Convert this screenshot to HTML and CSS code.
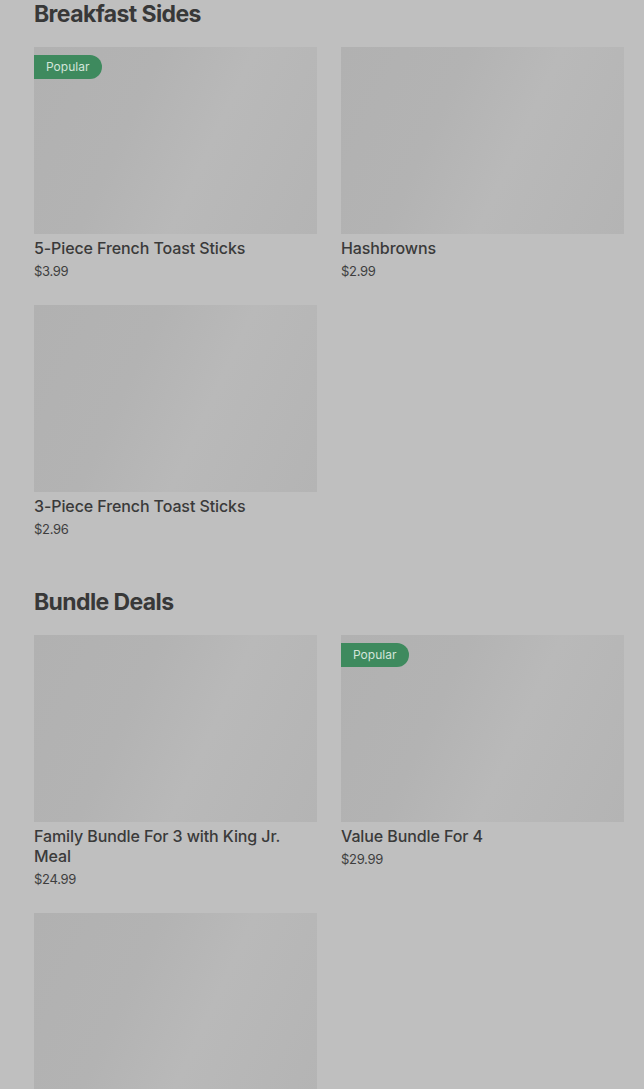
FILE: index.html
```html
<!DOCTYPE html>
<html lang="en">
<head>
<meta charset="utf-8">
<title>Menu</title>
<link rel="stylesheet" href="styles.css">
</head>
<body>
<main class="page">
  <section class="section">
    <h2 class="section-title">Breakfast Sides</h2>
    <div class="grid">
      <div class="card">
        <div class="thumb"><span class="badge">Popular</span></div>
        <div class="name">5-Piece French Toast Sticks</div>
        <div class="price">$3.99</div>
      </div>
      <div class="card">
        <div class="thumb"></div>
        <div class="name">Hashbrowns</div>
        <div class="price">$2.99</div>
      </div>
      <div class="card">
        <div class="thumb"></div>
        <div class="name">3-Piece French Toast Sticks</div>
        <div class="price">$2.96</div>
      </div>
    </div>
  </section>
  <section class="section">
    <h2 class="section-title">Bundle Deals</h2>
    <div class="grid">
      <div class="card">
        <div class="thumb"></div>
        <div class="name">Family Bundle For 3 with King Jr. Meal</div>
        <div class="price">$24.99</div>
      </div>
      <div class="card">
        <div class="thumb"><span class="badge">Popular</span></div>
        <div class="name">Value Bundle For 4</div>
        <div class="price">$29.99</div>
      </div>
      <div class="card">
        <div class="thumb"></div>
      </div>
    </div>
  </section>
</main>
</body>
</html>
```
FILE: styles.css
```css
html, body {
  margin: 0;
  padding: 0;
  background: #bfbfbf;
}
body {
  font-family: Inter, "Noto Sans", sans-serif;
  color: #3a3a3a;
}
.page {
  padding: 0 20px 0 34px;
}
.section {
  margin-bottom: 49px;
}
.section-title {
  margin: 0 0 19px;
  font-size: 23px;
  line-height: 28px;
  font-weight: 700;
  letter-spacing: -0.6px;
  color: #383838;
}
.grid {
  display: grid;
  grid-template-columns: 283px 283px;
  column-gap: 24px;
  row-gap: 24px;
}
.card {
  display: flex;
  flex-direction: column;
}
.thumb {
  position: relative;
  height: 187px;
  background: linear-gradient(115deg, #b1b1b1 0%, #b3b3b3 35%, #b9b9b9 60%, #b4b4b4 100%);
  margin-bottom: 4px;
}
.badge {
  position: absolute;
  top: 8px;
  left: 0;
  height: 24px;
  line-height: 24px;
  padding: 0 13px 0 12px;
  background: #3e8a5e;
  color: #d3e5da;
  font-size: 12px;
  border-radius: 0 12px 12px 0;
}
.name {
  font-size: 16px;
  line-height: 20px;
  font-weight: 500;
  letter-spacing: -0.1px;
  color: #3a3a3a;
  padding-right: 30px;
}
.price {
  margin-top: 3px;
  font-size: 13px;
  line-height: 20px;
  letter-spacing: -0.3px;
  color: #3e3e3e;
}
```
